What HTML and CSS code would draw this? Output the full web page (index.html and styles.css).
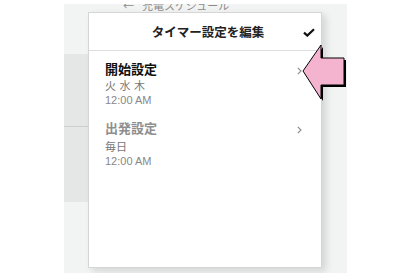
FILE: index.html
```html
<!DOCTYPE html>
<html lang="ja">
<head>
<meta charset="utf-8">
<link rel="stylesheet" href="styles.css">
</head>
<body>
<div class="app">
  <div class="topbar"><span class="back">←</span>充電スケジュール</div>
  <div class="list">
    <div class="item"></div>
    <div class="item"></div>
  </div>
  <div class="dialog">
    <div class="dlg-head">
      <span class="dlg-title">タイマー設定を編集</span>
      <svg class="check" width="12" height="9" viewBox="0 0 12 9"><path d="M1 4.6 L4.3 7.6 L11 1.2" fill="none" stroke="#111" stroke-width="2.2" stroke-linejoin="miter"/></svg>
    </div>
    <div class="dlg-body">
      <div class="row">
        <div class="row-head"><span class="row-title">開始設定</span><svg class="chev" width="5" height="8" viewBox="0 0 5 8"><path d="M0.8 0.8 L4 4 L0.8 7.2" fill="none" stroke="#8a8a8a" stroke-width="1.1"/></svg></div>
        <div class="row-sub">火 水 木</div>
        <div class="row-time">12:00 AM</div>
      </div>
      <div class="row muted">
        <div class="row-head"><span class="row-title">出発設定</span><svg class="chev" width="5" height="8" viewBox="0 0 5 8"><path d="M0.8 0.8 L4 4 L0.8 7.2" fill="none" stroke="#8a8a8a" stroke-width="1.1"/></svg></div>
        <div class="row-sub">毎日</div>
        <div class="row-time">12:00 AM</div>
      </div>
    </div>
  </div>
  <svg class="pointer" width="52" height="62" viewBox="300 42 52 62">
    <polygon points="305,73 323,47 323,60 346,60 346,87 323,87 323,101" fill="#000"/>
    <polygon points="303,71 321,45 321,58 344,58 344,85 321,85 321,99" fill="#f4b4cf" stroke="#000" stroke-width="1" stroke-linejoin="miter"/>
  </svg>
</div>
</body>
</html>
```

FILE: styles.css
```css
* { box-sizing: border-box; }
body {
  margin: 0;
  padding: 4px 0 0 64px;
  background: #fff;
  font-family: "Noto Sans CJK JP", "Noto Sans", sans-serif;
}
.app {
  width: 283px;
  height: 269px;
  background: #f2f3f3;
  position: relative;
  overflow: hidden;
}
.topbar {
  margin-top: -6px;
  height: 56px;
  padding-left: 59px;
  font-size: 11px;
  line-height: 14px;
  color: #8c8c8c;
  display: flex;
  align-items: flex-start;
}
.back {
  display: inline-block;
  width: 19px;
}
.list {
  width: 250px;
}
.item {
  background: #e5e6e6;
}
.item:first-child {
  height: 73px;
  border-bottom: 1px solid #cfcfcf;
}
.item:last-child {
  height: 75px;
}
.dialog {
  position: absolute;
  left: 24px;
  top: 8px;
  width: 234px;
  height: 256px;
  background: #fff;
  border: 1px solid #d6d6d6;
  box-shadow: 4px 3px 7px rgba(0, 0, 0, 0.13);
}
.dlg-head {
  height: 38px;
  border-bottom: 1px solid #dedede;
  display: flex;
  align-items: center;
  padding: 0 6px 0 24px;
}
.dlg-title {
  flex: 1;
  text-align: center;
  font-size: 12.5px;
  font-weight: 700;
  color: #222;
}
.check {
  margin-top: 2px;
}
.dlg-body {
  padding: 9px 19px 0 16px;
}
.row + .row {
  margin-top: 12px;
}
.row-head {
  display: flex;
  align-items: center;
  justify-content: space-between;
  height: 18px;
}
.row-title {
  font-size: 13px;
  line-height: 18px;
  font-weight: 700;
  color: #111;
}
.chev {
  margin-top: 3px;
}
.row-sub {
  font-size: 11px;
  line-height: 15px;
  color: #777;
  word-spacing: 1px;
}
.row-time {
  font-family: "Liberation Sans", Arial, sans-serif;
  font-size: 11px;
  line-height: 14px;
  color: #888;
  letter-spacing: 0;
}
.muted .row-title {
  color: #8e8e8e;
}
.muted .row-sub {
  margin-top: 2px;
}
.pointer {
  position: absolute;
  left: 236px;
  top: 38px;
}
```
